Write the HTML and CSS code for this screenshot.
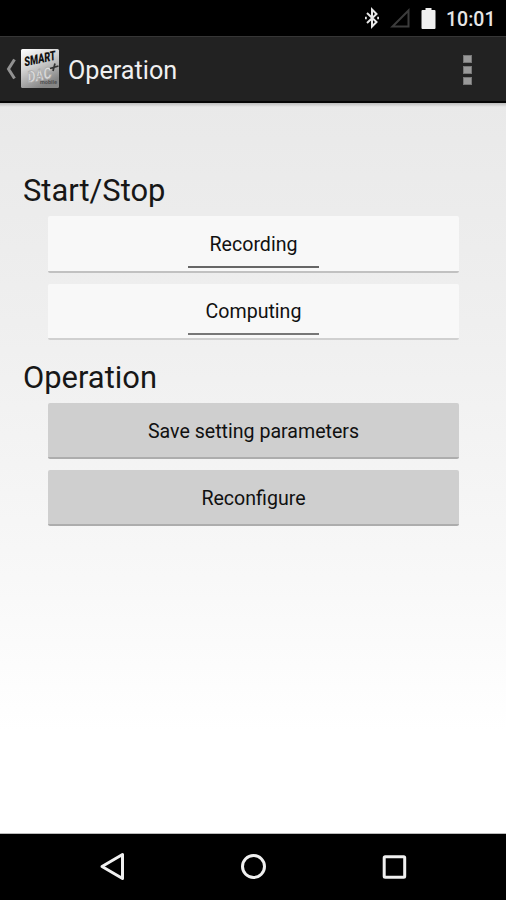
FILE: index.html
```html
<!DOCTYPE html>
<html lang="en">
<head>
<meta charset="utf-8">
<title>Operation</title>
<link rel="stylesheet" href="styles.css">
</head>
<body>
<div class="status-bar">
  <svg class="bluetooth" width="14" height="22" viewBox="0 0 14 22"><path d="M2 6 11.500 15 7 19.500V2.500L11.500 7 2 16M.8 9.800v2.400M13.200 9.800v2.400"/></svg>
  <svg class="signal" width="20" height="20" viewBox="0 0 20 20"><path d="M2.500 18.500H18.500V2.500Z"/></svg>
  <svg class="battery" width="15" height="21" viewBox="0 0 15 21"><path d="M4.500 0h6v2H13.500q1 0 1 1V20q0 1-1 1h-12q-1 0-1-1V3q0-1 1-1h3z"/></svg>
  <span class="clock">10:01</span>
</div>
<header class="action-bar">
  <svg class="up" width="12" height="24" viewBox="0 0 12 24"><path d="M10.500 2.500 4.500 12 10.500 21.500"/></svg>
  <svg class="logo" width="40" height="42" viewBox="0 0 40 42">
    <defs><linearGradient id="silver" x1="0" y1="0" x2="0.500" y2="1"><stop offset="0" stop-color="#fff"/><stop offset=".45" stop-color="#d4d4d4"/><stop offset="1" stop-color="#858585"/></linearGradient></defs>
    <rect x="1" y="1" width="38" height="39" rx="1.500" fill="url(#silver)"/>
    <text class="logo-smart" transform="translate(4.500 18.500) rotate(-12) skewX(-10)" textLength="32" lengthAdjust="spacingAndGlyphs">SMART</text>
    <text class="logo-dac" transform="translate(8 35) rotate(-12) skewX(-10)" textLength="24" lengthAdjust="spacingAndGlyphs">DAC</text>
    <path d="M30 20.500 38.500 18M35 15.500 33 23" stroke="#333" stroke-width="1.700"/>
    <text class="logo-mobile" x="20" y="36" textLength="17" lengthAdjust="spacingAndGlyphs">mobile</text>
  </svg>
  <h1 class="title">Operation</h1>
  <div class="overflow"><i></i><i></i><i></i></div>
</header>
<main class="content">
  <h2 class="heading">Start/Stop</h2>
  <div class="buttons">
    <button class="button toggle"><span>Recording</span></button>
    <button class="button toggle faint"><span>Computing</span></button>
  </div>
  <h2 class="heading">Operation</h2>
  <div class="buttons">
    <button class="button">Save setting parameters</button>
    <button class="button">Reconfigure</button>
  </div>
</main>
<nav class="nav-bar">
  <svg width="30" height="30" viewBox="0 0 30 30"><path d="M5 14.500 25.500 2.500V26.500Z"/></svg>
  <svg width="30" height="30" viewBox="0 0 30 30"><circle cx="15.500" cy="14.500" r="11"/></svg>
  <svg width="30" height="30" viewBox="0 0 30 30"><rect x="5.200" y="4.700" width="20.500" height="20.500" rx="1"/></svg>
</nav>
</body>
</html>
```
FILE: styles.css
```css
* {
  box-sizing: border-box;
}

body {
  display: flex;
  flex-direction: column;
  width: 506px;
  height: 900px;
  margin: 0;
  overflow: hidden;
  background: #000;
  color: #171717;
  font-family: Roboto, "Liberation Sans", sans-serif;
}

.status-bar {
  display: flex;
  align-items: center;
  justify-content: flex-end;
  height: 36px;
  padding-right: 12px;
  background: #000;
}

.bluetooth {
  margin-right: 11px;
  fill: none;
  stroke: #e8e8e8;
  stroke-width: 2;
}

.signal {
  margin-right: 11px;
  fill: none;
  stroke: #3c3c3c;
  stroke-width: 2;
}

.battery {
  margin-right: 10px;
  fill: #f0f0f0;
}

.clock {
  width: 48px;
  padding-top: 3px;
  color: #e6e6e6;
  font-size: 19.5px;
  font-weight: 500;
  line-height: 33px;
  white-space: nowrap;
}

.action-bar {
  display: flex;
  flex: none;
  align-items: center;
  height: 67px;
  padding: 1px 34px 1px 4px;
  border-top: 1px solid #363636;
  border-bottom: 2px solid #050505;
  background: #222;
}

.up {
  margin-right: 4px;
  fill: none;
  stroke: #929292;
  stroke-width: 3;
}

.logo {
  margin-right: 8px;
  overflow: visible;
}

.logo-smart {
  fill: #111;
  font-size: 13px;
  font-weight: 900;
}

.logo-dac {
  fill: #ddd;
  stroke: #aaa;
  stroke-width: 0.7px;
  font-size: 16px;
  font-weight: 900;
}

.logo-mobile {
  fill: #505050;
  font-size: 6px;
  font-weight: 700;
}

.title {
  margin: 3px 0 0;
  color: #f0f0f0;
  font-size: 25.2px;
  font-weight: 400;
}

.overflow {
  display: grid;
  gap: 3px;
  margin: 1px 0 0 auto;
}

.overflow i {
  width: 9px;
  height: 8px;
  border: 1px solid #777;
  background: #999;
}

.content {
  flex: 1;
  padding: 68px 47px 0 23px;
  border-bottom: 1px solid #bbb;
  background:
    linear-gradient(#bcbcbc, #bcbcbc00) top / 100% 4px no-repeat,
    linear-gradient(#e9e9e9, #efefef 30%, #f8f8f8 65%, #fff 86%);
}

.heading {
  height: 45px;
  margin: 0;
  font-size: 30.9px;
  font-weight: 400;
  line-height: 39px;
}

.buttons {
  display: grid;
  gap: 11px;
  padding-left: 25px;
}

.buttons + .heading {
  margin-top: 18px;
}

.button {
  display: flex;
  align-items: center;
  justify-content: center;
  height: 56px;
  padding: 2px 0 0;
  border: 0;
  border-bottom: 2px solid #adadad;
  border-radius: 2px;
  background: #cfcfcf;
  color: #111;
  font: 19.6px Roboto, "Liberation Sans", sans-serif;
}

.toggle {
  align-items: flex-end;
  height: 57px;
  padding-bottom: 3px;
  border-color: #c1c1c1;
  background: #f8f8f8;
}

.toggle span {
  width: 131px;
  height: 35px;
  border-bottom: 2px solid #666;
}

.faint {
  height: 56px;
  border-color: #d0d0d0;
}

.faint span {
  border-color: #777;
}

.nav-bar {
  display: flex;
  flex: none;
  align-items: center;
  justify-content: center;
  gap: 111px;
  height: 66px;
  background: #000;
}

.nav-bar svg {
  fill: none;
  stroke: #f0f0f0;
  stroke-width: 3;
  stroke-linejoin: round;
}
```
